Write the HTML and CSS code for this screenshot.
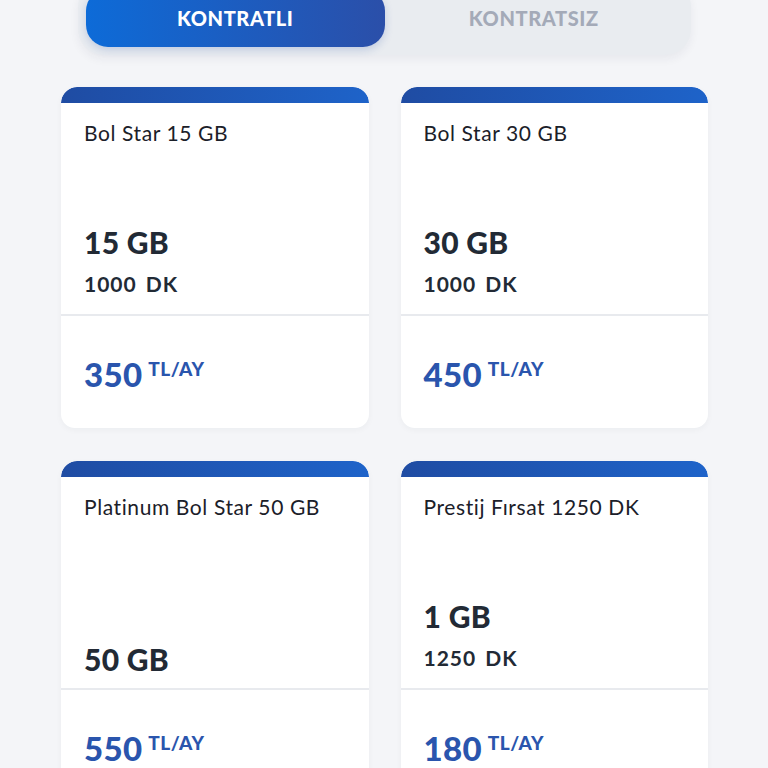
FILE: index.html
```html
<!DOCTYPE html>
<html lang="tr">
<head>
    <meta charset="UTF-8">
    <meta name="viewport" content="width=device-width, initial-scale=1.0">
    <title>Tarifeler</title>
    <link rel="stylesheet" href="styles.css">
</head>
<body>
    <div class="page">
        <div class="tabs">
            <button class="tab active">KONTRATLI</button>
            <button class="tab">KONTRATSIZ</button>
        </div>

        <div class="plans">
            <div class="plan">
                <div class="plan-top">
                    <div class="plan-name">Bol Star 15 GB</div>
                    <div class="plan-stats">
                        <div class="plan-data">15 GB</div>
                        <div class="plan-minutes">1000 DK</div>
                    </div>
                </div>
                <div class="plan-price">
                    <span class="amount">350</span><span class="unit">TL/AY</span>
                </div>
            </div>

            <div class="plan">
                <div class="plan-top">
                    <div class="plan-name">Bol Star 30 GB</div>
                    <div class="plan-stats">
                        <div class="plan-data">30 GB</div>
                        <div class="plan-minutes">1000 DK</div>
                    </div>
                </div>
                <div class="plan-price">
                    <span class="amount">450</span><span class="unit">TL/AY</span>
                </div>
            </div>

            <div class="plan">
                <div class="plan-top">
                    <div class="plan-name">Platinum Bol Star 50 GB</div>
                    <div class="plan-stats">
                        <div class="plan-data">50 GB</div>
                    </div>
                </div>
                <div class="plan-price">
                    <span class="amount">550</span><span class="unit">TL/AY</span>
                </div>
            </div>

            <div class="plan">
                <div class="plan-top">
                    <div class="plan-name">Prestij Fırsat 1250 DK</div>
                    <div class="plan-stats">
                        <div class="plan-data">1 GB</div>
                        <div class="plan-minutes">1250 DK</div>
                    </div>
                </div>
                <div class="plan-price">
                    <span class="amount">180</span><span class="unit">TL/AY</span>
                </div>
            </div>
        </div>
    </div>
</body>
</html>
```

FILE: styles.css
```css
* {
    box-sizing: border-box;
}

body {
    margin: 0;
    background-color: #f4f5f8;
    font-family: Lato, "Noto Sans", sans-serif;
    color: #1f2630;
    overflow: hidden;
}

.page {
    padding: 0 60px 0 61px;
}

.tabs {
    display: flex;
    margin: -19px 17px 0;
    padding: 8px;
    background-color: #e9ecf0;
    border-radius: 26px;
    box-shadow: 0 4px 10px rgba(30, 40, 60, 0.06);
}

.tab {
    flex: 1;
    height: 58px;
    padding: 0;
    border: none;
    border-radius: 22px;
    background: transparent;
    font-family: Lato, "Noto Sans", sans-serif;
    font-size: 20px;
    font-weight: 900;
    color: #a4aab8;
    letter-spacing: 0.6px;
    cursor: pointer;
}

.tab.active {
    background: linear-gradient(90deg, #0d6bd8, #2b4fa9);
    color: white;
    box-shadow: 0 3px 8px rgba(30, 70, 160, 0.2);
}

.plans {
    display: grid;
    grid-template-columns: 1fr 1fr;
    column-gap: 32px;
    row-gap: 33px;
    margin-top: 32px;
}

.plan {
    background-color: white;
    border-radius: 16px 16px 14px 14px;
    overflow: hidden;
    box-shadow: 0 2px 6px rgba(30, 40, 60, 0.04);
}

.plan::before {
    content: '';
    display: block;
    height: 16px;
    background: linear-gradient(90deg, #1f4ca3, #1e63c9);
    border-radius: 16px 16px 0 0;
}

.plan-top {
    display: flex;
    flex-direction: column;
    height: 213px;
    padding: 17px 23px 12px;
    border-bottom: 2px solid #e8eaee;
}

.plan-name {
    font-size: 21px;
    line-height: 26px;
    letter-spacing: 0.6px;
    color: #1b2029;
}

.plan-stats {
    margin-top: auto;
}

.plan-data {
    font-size: 30px;
    line-height: 34px;
    font-weight: 900;
    letter-spacing: 0.3px;
    color: #222a35;
}

.plan-minutes {
    margin: 13px 0 6px;
    font-size: 21px;
    line-height: 24px;
    font-weight: 700;
    letter-spacing: 1px;
    word-spacing: 3px;
    color: #222a35;
}

.plan-price {
    height: 112px;
    padding: 39px 23px 0;
    color: #2a55ad;
    font-weight: 900;
}

.amount {
    font-size: 33px;
    line-height: 38px;
    letter-spacing: 0.3px;
}

.unit {
    font-size: 19px;
    vertical-align: top;
    margin-left: 6px;
    letter-spacing: 0.5px;
    position: relative;
    top: 2px;
}
```
